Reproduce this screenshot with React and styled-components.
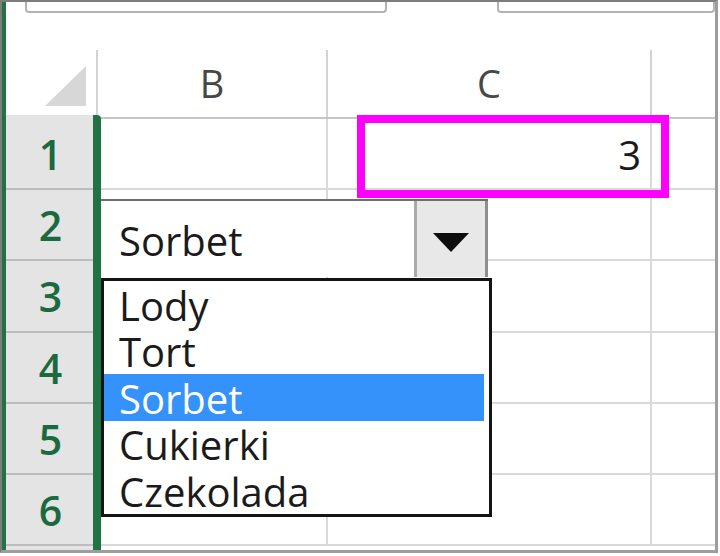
import React from 'react';
import styled, { createGlobalStyle } from 'styled-components';

const GlobalStyle = createGlobalStyle`
  html, body {
    margin: 0;
    padding: 0;
    background: #ffffff;
  }
  * {
    box-sizing: border-box;
  }
`;

const columns = ['B', 'C', 'D'];
const rows = [1, 2, 3, 4, 5, 6];
const options = ['Lody', 'Tort', 'Sorbet', 'Cukierki', 'Czekolada'];
const selected = 'Sorbet';

const Frame = styled.div`
  width: 718px;
  height: 553px;
  border-top: 2px solid #7d7d7d;
  border-left: 2px solid #7d7d7d;
  border-right: 3px solid #9d9d9d;
  border-bottom: 3px solid #9d9d9d;
  background: #ffffff;
  overflow: hidden;
  font-family: 'Open Sans', 'Noto Sans', sans-serif;
  line-height: 1;
`;

const Window = styled.div`
  height: 100%;
  border-left: 4px solid #217346;
  display: flex;
  flex-direction: column;
`;

const TopStrip = styled.div`
  height: 11px;
  display: flex;
  flex-shrink: 0;
`;

const Bar = styled.div`
  height: 11px;
  margin-left: ${({ $offset }) => $offset}px;
  width: ${({ $width }) => ($width ? `${$width}px` : 'auto')};
  flex: ${({ $width }) => ($width ? '0 0 auto' : '1')};
  border: 2px solid #b3b3b3;
  border-top: none;
  border-radius: 0 0 4px 4px;
`;

const Spacer = styled.div`
  height: 37px;
  flex-shrink: 0;
`;

const HeaderRow = styled.div`
  height: 69px;
  flex-shrink: 0;
  display: flex;
  border-bottom: 2px solid #c6c6c6;
`;

const Corner = styled.div`
  width: 92px;
  border-right: 2px solid #d3d3d3;
  display: flex;
  align-items: flex-end;
  justify-content: flex-end;
  padding: 0 10px 11px 0;
`;

const ColHeader = styled.div`
  width: ${({ $width }) => ($width ? `${$width}px` : 'auto')};
  flex: ${({ $width }) => ($width ? '0 0 auto' : '1')};
  border-right: ${({ $last }) => ($last ? 'none' : '2px solid #d3d3d3')};
  display: flex;
  align-items: center;
  justify-content: center;
  font-size: 38px;
  color: #474747;
  padding-bottom: 2px;
`;

const Body = styled.div`
  flex: 1;
  display: flex;
`;

const RowHeads = styled.div`
  width: 95px;
  background: #e4e4e4;
  border-right: 8px solid #217346;
  border-top-right-radius: 4px;
  margin-top: -4px;
  padding-top: 4px;
`;

const RowHead = styled.div`
  height: 71.2px;
  border-bottom: 2px solid #bcbcbc;
  display: flex;
  align-items: center;
  justify-content: center;
  font-size: 41px;
  font-weight: 600;
  color: #1b6a3f;
  padding: 2px 0 0 2px;
`;

const Grid = styled.div`
  flex: 1;
  display: flex;
  flex-direction: column;
`;

const Row = styled.div`
  height: 71.2px;
  display: flex;
`;

const Cell = styled.div`
  position: relative;
  width: ${({ $width }) => ($width ? `${$width}px` : 'auto')};
  flex: ${({ $width }) => ($width ? '0 0 auto' : '1')};
  border-right: ${({ $last }) => ($last ? 'none' : '2px solid #d9d9d9')};
  border-bottom: 2px solid #d9d9d9;
  display: flex;
  align-items: center;
  justify-content: ${({ $align }) => ($align === 'right' ? 'flex-end' : 'flex-start')};
  padding: 2px 9px 0 18px;
  font-size: 40px;
  color: #1b1b1b;
  z-index: ${({ $raised }) => ($raised ? 2 : 'auto')};
`;

const Highlight = styled.div`
  position: absolute;
  left: 29px;
  top: -4px;
  width: 312px;
  height: 83px;
  border: 8px solid #ff00ff;
  pointer-events: none;
`;

const Combo = styled.div`
  position: absolute;
  left: 0;
  top: 9px;
  width: 387px;
  height: 78px;
  background: #ffffff;
  border-top: 2px solid #6e6e6e;
  display: flex;
`;

const ComboValue = styled.div`
  flex: 1;
  display: flex;
  align-items: center;
  padding: 4px 0 0 18px;
  font-size: 40px;
  color: #1b1b1b;
`;

const ComboButton = styled.div`
  width: 74px;
  height: 76px;
  background: #e8e8e8;
  border-left: 3px solid #a9a9a9;
  border-right: 3px solid #8f8f8f;
  display: flex;
  align-items: center;
  justify-content: center;
  padding-top: 6px;
`;

const ListBox = styled.div`
  position: absolute;
  left: 0;
  top: 88px;
  width: 391px;
  border: 3px solid #141414;
  background: #ffffff;
  padding-right: 5px;
`;

const Option = styled.div`
  height: 46.5px;
  display: flex;
  align-items: center;
  padding: 3px 0 0 15px;
  font-size: 40px;
  color: ${({ $active }) => ($active ? '#ffffff' : '#1b1b1b')};
  background: ${({ $active }) => ($active ? '#3592fa' : 'transparent')};
`;

const Arrow = () => (
  <svg width="36" height="19" viewBox="0 0 36 19">
    <path d="M0 0 H36 L18 19 Z" fill="#0d0d0d" />
  </svg>
);

const CornerMark = () => (
  <svg width="41" height="40" viewBox="0 0 41 40">
    <path d="M41 0 V40 H0 Z" fill="#d7d7d7" />
  </svg>
);

const Dropdown = () => (
  <>
    <Combo>
      <ComboValue>{selected}</ComboValue>
      <ComboButton>
        <Arrow />
      </ComboButton>
    </Combo>
    <ListBox>
      {options.map((o) => (
        <Option key={o} $active={o === selected}>
          {o}
        </Option>
      ))}
    </ListBox>
  </>
);

export default function App() {
  return (
    <>
      <GlobalStyle />
      <Frame>
        <Window>
          <TopStrip>
            <Bar $offset={19} $width={362} />
            <Bar $offset={110} />
          </TopStrip>
          <Spacer />
          <HeaderRow>
            <Corner>
              <CornerMark />
            </Corner>
            <ColHeader $width={230}>{columns[0]}</ColHeader>
            <ColHeader $width={324}>{columns[1]}</ColHeader>
            <ColHeader $last />
          </HeaderRow>
          <Body>
            <RowHeads>
              {rows.map((r) => (
                <RowHead key={r}>{r}</RowHead>
              ))}
            </RowHeads>
            <Grid>
              {rows.map((r) => (
                <Row key={r}>
                  <Cell $width={227} $raised={r === 2}>
                    {r === 2 && <Dropdown />}
                  </Cell>
                  <Cell $width={324} $align="right" $raised={r === 1}>
                    {r === 1 && '3'}
                    {r === 1 && <Highlight />}
                  </Cell>
                  <Cell $last />
                </Row>
              ))}
            </Grid>
          </Body>
        </Window>
      </Frame>
    </>
  );
}
